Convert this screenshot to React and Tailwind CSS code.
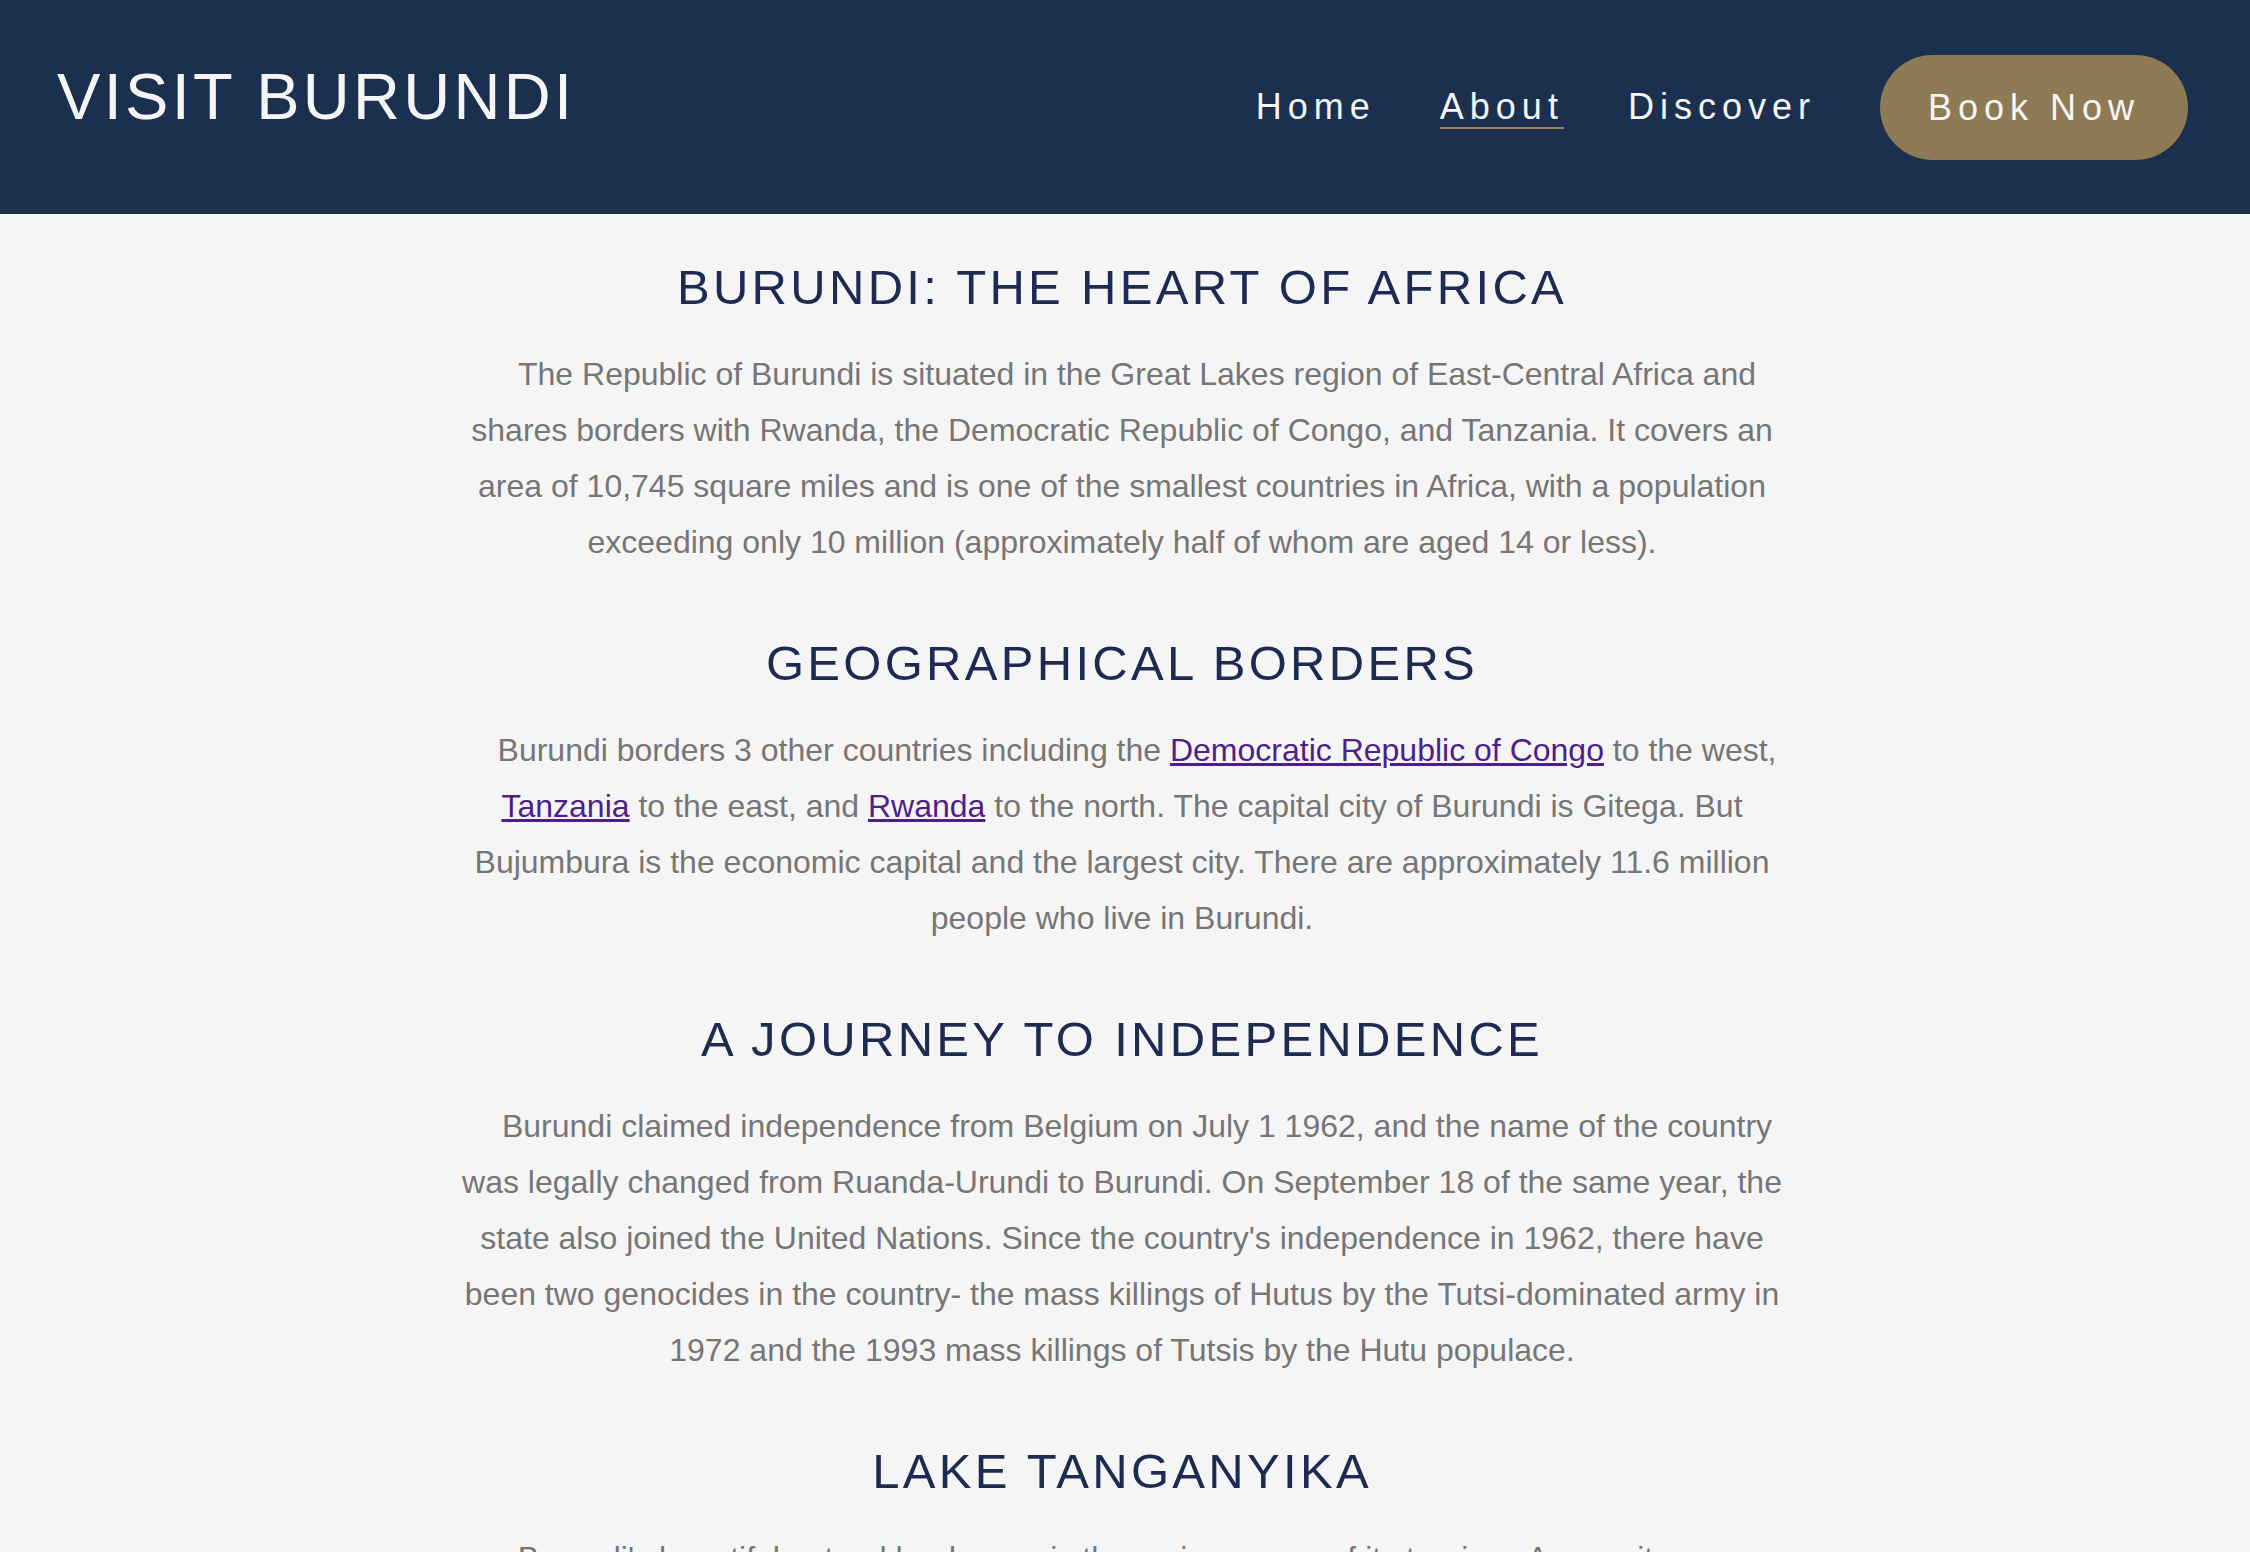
const sections = [
  {
    title: 'BURUNDI: THE HEART OF AFRICA',
    body: (
      <>
        The Republic of Burundi is situated in the Great Lakes region of East-Central Africa and shares borders with
        Rwanda, the Democratic Republic of Congo, and Tanzania. It covers an area of 10,745 square miles and is one of
        the smallest countries in Africa, with a population exceeding only 10 million (approximately half of whom are
        aged 14 or less).
      </>
    ),
  },
  {
    title: 'GEOGRAPHICAL BORDERS',
    body: (
      <>
        Burundi borders 3 other countries including the{' '}
        <a href="#" className="text-[#4f1d8c] underline">Democratic Republic of Congo</a> to the west,{' '}
        <a href="#" className="text-[#4f1d8c] underline">Tanzania</a> to the east, and{' '}
        <a href="#" className="text-[#4f1d8c] underline">Rwanda</a> to the north. The capital city of Burundi is
        Gitega. But Bujumbura is the economic capital and the largest city. There are approximately 11.6 million people
        who live in Burundi.
      </>
    ),
  },
  {
    title: 'A JOURNEY TO INDEPENDENCE',
    body: (
      <>
        Burundi claimed independence from Belgium on July 1 1962, and the name of the country was legally changed from
        Ruanda-Urundi to Burundi. On September 18 of the same year, the state also joined the United Nations. Since the
        country's independence in 1962, there have been two genocides in the country- the mass killings of Hutus by the
        Tutsi-dominated army in 1972 and the 1993 mass killings of Tutsis by the Hutu populace.
      </>
    ),
  },
  {
    title: 'LAKE TANGANYIKA',
    body: (
      <>
        Burundi's beautiful natural landscape is the major source of its tourism. Among its many attractions is Lake
        Tanganyika, the second deepest lake in the world, with sandy beaches stretching along the shore near Bujumbura.
      </>
    ),
  },
]

export default function App() {
  return (
    <div className="min-h-screen bg-[#f5f5f5] font-['Liberation_Sans',Arial,sans-serif]">
      {/* header */}
      <header className="h-[214px] bg-[#1b304e] flex items-center justify-between pl-[57px] pr-[62px]">
        <h1 className="text-[65px] leading-[75px] tracking-[3.3px] text-[#f5f5f5] mb-[21px]">VISIT BURUNDI</h1>
        <nav className="flex items-center gap-[64px] text-[36px] tracking-[6px] text-[#f5f5f5]">
          <a href="#" className="leading-[41px] border-b-[2px] border-transparent">Home</a>
          <a href="#" className="leading-[41px] border-b-[2px] border-[#9c7f4e]">About</a>
          <a href="#" className="leading-[41px] border-b-[2px] border-transparent">Discover</a>
          <a href="#" className="leading-[41px] bg-[#8e7a55] rounded-full px-[48px] py-[32px]">Book Now</a>
        </nav>
      </header>

      {/* content */}
      <main className="w-[1346px] mx-auto pr-[6px] pt-[45px] flex flex-col gap-[65px] text-center">
        {sections.map((s) => (
          <section key={s.title} className="flex flex-col gap-[31px]">
            <h2 className="text-[49px] leading-[56px] tracking-[3.3px] text-[#1d2a51]">{s.title}</h2>
            <p className="text-[32px] leading-[56px] text-[#767676] indent-[30px]">{s.body}</p>
          </section>
        ))}
      </main>
    </div>
  )
}
